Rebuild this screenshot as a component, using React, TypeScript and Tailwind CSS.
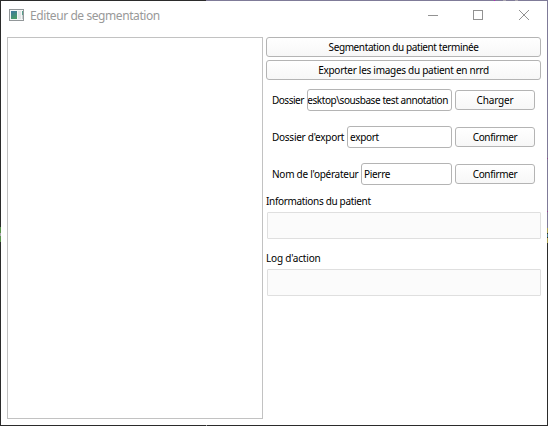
import type { ReactNode } from "react";

function Button({ children, className = "" }: { children: ReactNode; className?: string }) {
  return (
    <button
      className={`flex shrink-0 items-center justify-center rounded-[3px] border border-[#b4b4b4] bg-linear-to-b from-white to-[#f7f7f7] whitespace-pre ${className}`}
    >
      {children}
    </button>
  );
}

function Row({ label, labelWidth, spacing, value, valueSpacing, action, actionSpacing, clipped = false }: {
  label: string;
  labelWidth: string;
  spacing: string;
  value: string;
  valueSpacing: string;
  action: string;
  actionSpacing: string;
  clipped?: boolean;
}) {
  return (
    <div className="flex h-[22px] items-center pr-[6px] pl-[6px]">
      <span className={`shrink-0 whitespace-nowrap ${labelWidth} ${spacing}`}>{label}</span>
      <div
        className={`flex h-[22px] min-w-0 flex-1 items-center overflow-hidden rounded-[3px] border border-[#b4b4b4] bg-white ${clipped ? "justify-end pr-[3px]" : "pl-[2px]"}`}
      >
        <span className={`whitespace-nowrap ${valueSpacing}`}>{value}</span>
      </div>
      <Button className={`ml-[3px] h-5 w-20 ${actionSpacing}`}>{action}</Button>
    </div>
  );
}

export default function App() {
  return (
    <div className="flex h-[426px] w-[548px] flex-col overflow-hidden bg-white font-['Noto_Sans',sans-serif] text-[10px] leading-[14px] text-black">
      <div className="flex h-px shrink-0">
        <div className="w-[206px] bg-[#2b2b2b]" />
        <div className="w-[288px] bg-[#7f7b98]" />
        <div className="w-px bg-[#c21bc0]" />
        <div className="w-2 bg-[#7f7b98]" />
        <div className="w-[3px] bg-[#aaa5ad]" />
        <div className="w-[9px] bg-[#7f7b98]" />
        <div className="w-[3px] bg-[#aaa5ad]" />
        <div className="flex-1 bg-[#7f7b98]" />
      </div>
      <div className="flex min-h-0 flex-1">
        <div className="flex w-px shrink-0 flex-col">
          <div className="h-[226px] bg-[#2b2b2b]" />
          <div className="h-[6px] bg-[#579149]" />
          <div className="h-[3px] bg-[#aaa5ad]" />
          <div className="h-[6px] bg-[#579149]" />
          <div className="flex-1 bg-[#2b2b2b]" />
        </div>
        <div className="flex min-w-0 flex-1 flex-col">
          <header className="flex h-[29px] shrink-0 items-center">
            <svg className="-mt-px ml-2 h-3 w-[15px] shrink-0" viewBox="0 0 15 12" shapeRendering="crispEdges">
              <defs>
                <linearGradient id="pane" x1="0" y1="0" x2="0.4" y2="1">
                  <stop offset="0" stopColor="#3d77a0" />
                  <stop offset="1" stopColor="#4a9a68" />
                </linearGradient>
              </defs>
              <rect x="0" y="0" width="15" height="12" fill="#929799" />
              <rect x="1" y="1" width="13" height="10" fill="#f5f6f6" />
              <rect x="2" y="2" width="6" height="8" fill="url(#pane)" />
              <rect x="9" y="2" width="3" height="8" fill="#e1e5e6" />
              <rect x="13" y="2" width="1" height="4" fill="#579f8b" />
              <rect x="13" y="6" width="1" height="4" fill="#c9cfd0" />
            </svg>
            <h1 className="ml-[6px] text-[12px] leading-4 font-normal tracking-[-0.42px] whitespace-nowrap text-[#999]">Editeur de segmentation</h1>
            <svg className="ml-auto h-[29px] w-[120px] shrink-0" viewBox="0 0 120 29" fill="none" stroke="#929292">
              <path d="M1 14.5h10" />
              <rect x="46.5" y="9.5" width="9" height="9" />
              <path d="M92 9l10 10M102 9l-10 10" />
            </svg>
          </header>
          <main className="flex min-h-0 flex-1 gap-[3px] pt-[7px] pr-[6px] pb-[6px] pl-[6px]">
            <div className="w-64 shrink-0 border border-[#c2c2c2]" />
            <div className="flex min-w-0 flex-1 flex-col">
              <Button className="h-5 tracking-[-0.39px]">Segmentation du patient terminée</Button>
              <Button className="mt-[3px] h-5 tracking-[-0.28px]">Exporter les images du patient en nrrd</Button>
              <div className="mt-[9px] flex flex-col gap-[15px]">
                <Row label="Dossier" labelWidth="w-[35px]" spacing="tracking-[-0.5px]" value="esktop\sousbase test annotation" valueSpacing="tracking-[-0.42px]" action="Charger" actionSpacing="tracking-[-0.15px]" clipped />
                <Row label="Dossier d'export" labelWidth="w-[75px]" spacing="tracking-[-0.26px]" value="export" valueSpacing="tracking-[-0.3px]" action="Confirmer" actionSpacing="tracking-[-0.35px]" />
                <Row label="Nom de l'opérateur" labelWidth="w-[89px]" spacing="tracking-[-0.26px]" value="Pierre" valueSpacing="tracking-[-0.3px]" action="Confirmer" actionSpacing="tracking-[-0.35px]" />
              </div>
              <p className="mt-[10px] -mb-px -translate-y-px tracking-[-0.33px]">Informations du patient</p>
              <div className="mt-[4px] ml-px h-[27px] shrink-0 rounded-[1px] border border-[#dfdfdf] bg-[#fbfbfb]" />
              <p className="mt-[13px] -translate-y-px tracking-[-0.2px]">Log d'action</p>
              <div className="mt-[3px] ml-px h-[27px] shrink-0 rounded-[1px] border border-[#dfdfdf] bg-[#fbfbfb]" />
            </div>
          </main>
        </div>
        <div className="flex w-px shrink-0 flex-col">
          <div className="h-[157px] bg-[#7f7b98]" />
          <div className="h-px bg-[#8b4a8a]" />
          <div className="h-[52px] bg-[#7f7b98]" />
          <div className="h-px bg-[#9b3f91]" />
          <div className="h-4 bg-[#7f7b98]" />
          <div className="h-[5px] bg-[#aaa04d]" />
          <div className="h-px bg-[#2b2b2b]" />
          <div className="h-[3px] bg-[#47798a]" />
          <div className="h-px bg-[#2b2b2b]" />
          <div className="h-[5px] bg-[#aaa04d]" />
          <div className="flex-1 bg-[#2b2b2b]" />
        </div>
      </div>
      <div className="flex h-px shrink-0">
        <div className="w-[206px] bg-[#2b2b2b]" />
        <div className="w-px bg-[#999]" />
        <div className="flex-1 bg-[#2b2b2b]" />
      </div>
    </div>
  );
}
